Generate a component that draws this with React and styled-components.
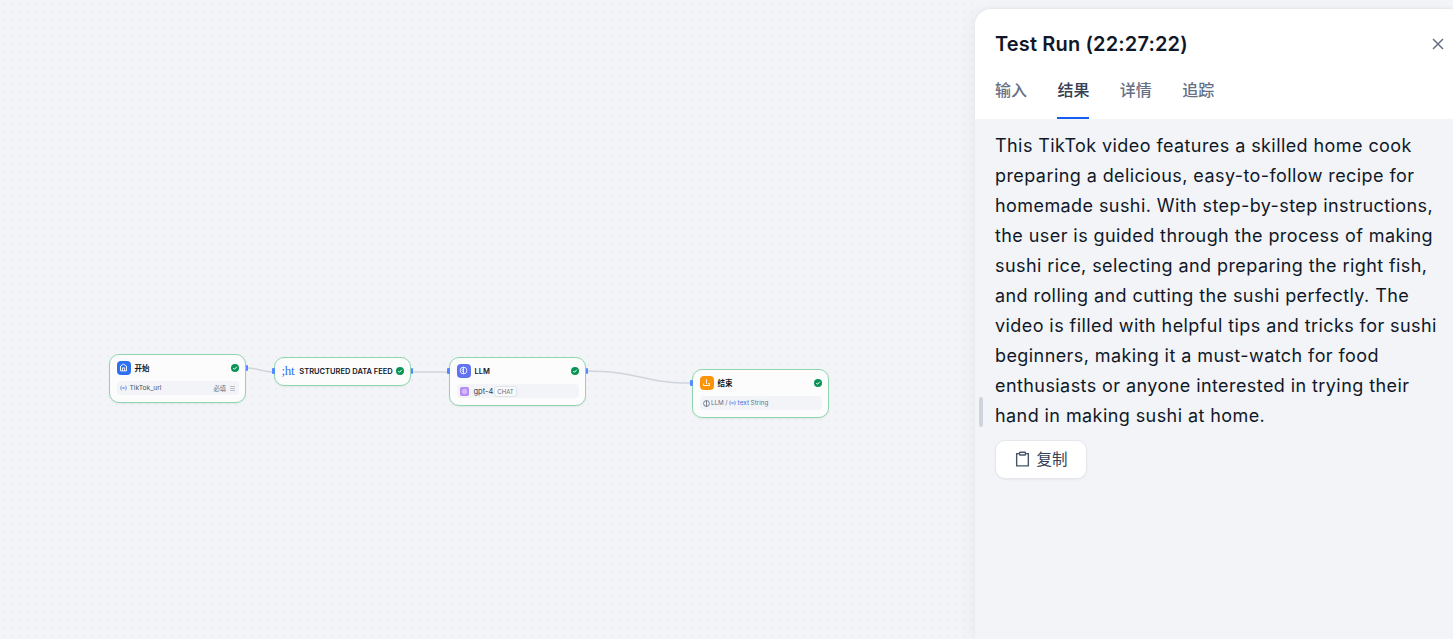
import React from "react";
import styled, { createGlobalStyle } from "styled-components";

const Global = createGlobalStyle`
  html, body { margin: 0; padding: 0; height: 100%; overflow: hidden; }
  #root { height: 100%; }
  body { font-family: Inter, "Noto Sans CJK SC", sans-serif; background: #f2f4f7; }
`;

const Page = styled.div`
  display: flex;
  height: 639px;
  width: 1453px;
  overflow: hidden;
  background: #f2f4f7;
`;

const Canvas = styled.div`
  position: relative;
  flex: 1;
  background-color: #f2f4f7;
  background-image: radial-gradient(circle at 4.5px 4.5px, #e8eaee 0.8px, transparent 1.1px);
  background-size: 8px 8px;
`;

const Edges = styled.svg`
  position: absolute;
  inset: 0;
  width: 100%;
  height: 100%;
`;

const Node = styled.div`
  position: absolute;
  left: ${(p) => p.$x}px;
  top: ${(p) => p.$y}px;
  width: 137px;
  height: ${(p) => p.$h}px;
  box-sizing: border-box;
  background: #fcfcfd;
  border: 1.5px solid #8ed6b0;
  border-radius: 10px;
  box-shadow: 0 1px 2px rgba(16, 24, 40, 0.06);
  padding: 5.5px 6px 0 6.5px;
  display: flex;
  flex-direction: column;
  gap: 6px;
`;

const Head = styled.div`
  display: flex;
  align-items: center;
  gap: 4px;
  height: 14px;
`;

const IconBox = styled.div`
  width: 14px;
  height: 14px;
  border-radius: 4px;
  background: ${(p) => p.$bg};
  display: flex;
  align-items: center;
  justify-content: center;
  flex: none;
`;

const Title = styled.div`
  flex: 1;
  font-size: 7.5px;
  font-weight: 600;
  color: #101828;
  white-space: nowrap;
  min-width: 0;
  padding-top: ${(p) => (p.$latin ? 1 : 0)}px;
`;

const Status = styled.svg`
  width: 8px;
  height: 8px;
  flex: none;
  margin-left: 2px;
`;

const Row = styled.div`
  display: flex;
  align-items: center;
  box-sizing: border-box;
  height: 14px;
  border-radius: 4px;
  background: #f2f4f7;
  padding: 1px 3px 0;
  font-size: 6.7px;
  color: #475467;
  gap: ${(p) => p.$gap || 3}px;
  white-space: nowrap;
`;

const Spacer = styled.span`
  flex: 1;
`;

const Muted = styled.span`
  color: #667085;
  font-size: 6.3px;
`;

const Var = styled.span`
  color: #3c6fe0;
  font-size: 6.5px;
`;

const ModelName = styled.span`
  font-size: 7.5px;
  color: #344054;
`;

const Tag = styled.span`
  border: 1px solid #e0e3e8;
  border-radius: 3px;
  color: #667085;
  font-size: 6px;
  padding: 0 2px;
  height: 9px;
  line-height: 9px;
  margin-left: -4px;
  background: #f9fafb;
`;

const Handle = styled.i`
  position: absolute;
  top: ${(p) => p.$t}px;
  ${(p) => (p.$side === "left" ? "left: -3px;" : "right: -3px;")}
  width: 2.5px;
  height: 6px;
  border-radius: 1px;
  background: #528bff;
`;

const HtLogo = styled.span`
  font-family: "Liberation Serif", serif;
  color: #2f6fed;
  font-size: 13px;
  line-height: 14px;
  flex: none;
  margin-left: 0;
  margin-right: 1px;
  letter-spacing: -0.3px;
`;

const Panel = styled.aside`
  width: 478px;
  height: 630px;
  margin-top: 9px;
  flex: none;
  border-radius: 16px 0 0 0;
  background: #f2f4f7;
  box-shadow: -6px 0 14px rgba(16, 24, 40, 0.03), 0 -1px 3px rgba(16, 24, 40, 0.05);
  display: flex;
  flex-direction: column;
  position: relative;
  color: #101828;
`;

const Header = styled.header`
  background: #fff;
  border-radius: 16px 0 0 0;
  height: 110px;
  padding: 0 8px 0 20px;
  display: flex;
  flex-direction: column;
`;

const HeaderTop = styled.div`
  display: flex;
  align-items: center;
  justify-content: space-between;
  height: 34px;
  margin-top: 18px;
`;

const PanelTitle = styled.h1`
  margin: 0;
  font-size: 20px;
  font-weight: 600;
  letter-spacing: 0.15px;
  color: #101828;
  line-height: 34px;
`;

const Close = styled.button`
  border: 0;
  background: none;
  padding: 0;
  display: flex;
  color: #667085;
`;

const Tabs = styled.nav`
  display: flex;
  gap: 30.4px;
  margin-top: 6px;
`;

const Tab = styled.div`
  height: 52px;
  box-sizing: border-box;
  padding-top: 11px;
  font-size: 16px;
  line-height: 24px;
  font-weight: 500;
  color: ${(p) => (p.$active ? "#344054" : "#667085")};
  border-bottom: 2px solid ${(p) => (p.$active ? "#155eef" : "transparent")};
`;

const Body = styled.div`
  padding: 12px 14px 0 20px;
`;

const Text = styled.p`
  margin: 0;
  font-size: 18px;
  line-height: 30px;
  letter-spacing: 0.42px;
  color: #101828;
`;

const CopyButton = styled.button`
  margin-top: 9px;
  width: 92px;
  height: 39px;
  display: flex;
  align-items: center;
  justify-content: center;
  gap: 5px;
  background: #fff;
  border: 1px solid #e4e7ec;
  border-radius: 10px;
  box-shadow: 0 1px 2px rgba(16, 24, 40, 0.05);
  font-family: inherit;
  font-size: 15.5px;
  line-height: 20px;
  color: #344054;
  padding: 0;
`;

const Resizer = styled.div`
  position: absolute;
  left: 4px;
  top: 388px;
  width: 4px;
  height: 30px;
  border-radius: 2px;
  background: #d0d5dd;
`;

const Check = () => (
  <Status viewBox="0 0 16 16">
    <circle cx="8" cy="8" r="8" fill="#079455" />
    <path d="M4.5 8.2l2.4 2.4 4.6-5" fill="none" stroke="#fff" strokeWidth="2" />
  </Status>
);

const VarIcon = () => (
  <svg width="7" height="6" viewBox="0 0 18 14" fill="none" stroke="#3c6fe0" strokeWidth="1.8">
    <path d="M4 1C1.5 4 1.5 10 4 13M14 1c2.5 3 2.5 9 0 12M6.5 4.5l5 5M11.5 4.5l-5 5" />
  </svg>
);

export default function App() {
  return (
    <Page>
      <Global />
      <Canvas>
        <Edges>
          <g fill="none" stroke="#d0d5dd" strokeWidth="1.5">
            <path d="M246 368 C260 368 260 372 274 372" />
            <path d="M411 372 L449 372" />
            <path d="M586 371 C640 371 640 383 692 383" />
          </g>
        </Edges>

        <Node $x={109} $y={354} $h={49}>
          <Handle $side="right" $t={10} />
          <Head>
            <IconBox $bg="#2e70f0">
              <svg width="9" height="9" viewBox="0 0 24 24" fill="none" stroke="#fff" strokeWidth="2.4">
                <path d="M4 21V8l8-5 8 5v13z" />
                <path d="M9 21v-8h6v8" />
              </svg>
            </IconBox>
            <Title>开始</Title>
            <Check />
          </Head>
          <Row>
            <VarIcon />
            <span>TikTok_url</span>
            <Spacer />
            <Muted>必填</Muted>
            <svg width="7" height="7" viewBox="0 0 14 14" stroke="#98a2b3" strokeWidth="1.3">
              <path d="M2 3h10M2 7h10M2 11h10" />
            </svg>
          </Row>
        </Node>

        <Node $x={274} $y={357} $h={29}>
          <Handle $side="left" $t={10} />
          <Handle $side="right" $t={10} />
          <Head>
            <HtLogo>;ht</HtLogo>
            <Title $latin>STRUCTURED DATA FEED</Title>
            <Check />
          </Head>
        </Node>

        <Node $x={449} $y={357} $h={49}>
          <Handle $side="left" $t={10} />
          <Handle $side="right" $t={10} />
          <Head>
            <IconBox $bg="#6172f3">
              <svg width="9" height="9" viewBox="0 0 24 24" fill="none" stroke="#fff" strokeWidth="2.2">
                <circle cx="12" cy="12" r="9" />
                <path d="M12 3v18M12 8c-3 0-4 2-4 4s2 3 4 3" />
              </svg>
            </IconBox>
            <Title $latin>LLM</Title>
            <Check />
          </Head>
          <Row $gap={5}>
            <svg width="9" height="9" viewBox="0 0 10 10">
              <rect width="10" height="10" rx="2" fill="#b58cf5" />
              <circle cx="5" cy="5" r="3" fill="#d3b8fb" />
            </svg>
            <ModelName>gpt-4</ModelName>
            <Tag>CHAT</Tag>
          </Row>
        </Node>

        <Node $x={692} $y={369} $h={49}>
          <Handle $side="left" $t={10} />
          <Head>
            <IconBox $bg="#fb9408">
              <svg width="9" height="9" viewBox="0 0 24 24" fill="none" stroke="#fff" strokeWidth="2.4">
                <path d="M12 3v12M12 15l-2-2M4 15v5h16v-5h-4" />
              </svg>
            </IconBox>
            <Title>结束</Title>
            <Check />
          </Head>
          <Row $gap={1.5}>
            <svg width="7" height="7" viewBox="0 0 24 24" fill="none" stroke="#475467" strokeWidth="2.4">
              <circle cx="12" cy="12" r="10" />
              <path d="M12 2v20" />
            </svg>
            <Muted>LLM</Muted>
            <Muted>/</Muted>
            <VarIcon />
            <Var>text</Var>
            <Muted>String</Muted>
          </Row>
        </Node>
      </Canvas>

      <Panel>
        <Resizer />
        <Header>
          <HeaderTop>
            <PanelTitle>Test Run (22:27:22)</PanelTitle>
            <Close aria-label="close">
              <svg width="14" height="14" viewBox="0 0 14 14" fill="none" stroke="currentColor" strokeWidth="1.5">
                <path d="M2 2l10 10M12 2L2 12" />
              </svg>
            </Close>
          </HeaderTop>
          <Tabs>
            <Tab>输入</Tab>
            <Tab $active>结果</Tab>
            <Tab>详情</Tab>
            <Tab>追踪</Tab>
          </Tabs>
        </Header>
        <Body>
          <Text>
            This TikTok video features a skilled home cook preparing a delicious, easy-to-follow recipe for homemade sushi. With step-by-step instructions, the user is guided through the process of making sushi rice, selecting and preparing the right fish, and rolling and cutting the sushi perfectly. The video is filled with helpful tips and tricks for sushi beginners, making it a must-watch for food enthusiasts or anyone interested in trying their hand in making sushi at home.
          </Text>
          <CopyButton>
            <svg width="17" height="17" viewBox="0 0 16 16" fill="none" stroke="#475467" strokeWidth="1.3">
              <path d="M5 2.5H2.5v11.5h11V2.5H11" />
              <rect x="5.2" y="1.2" width="5.6" height="2.6" rx=".6" />
            </svg>
            复制
          </CopyButton>
        </Body>
      </Panel>
    </Page>
  );
}
